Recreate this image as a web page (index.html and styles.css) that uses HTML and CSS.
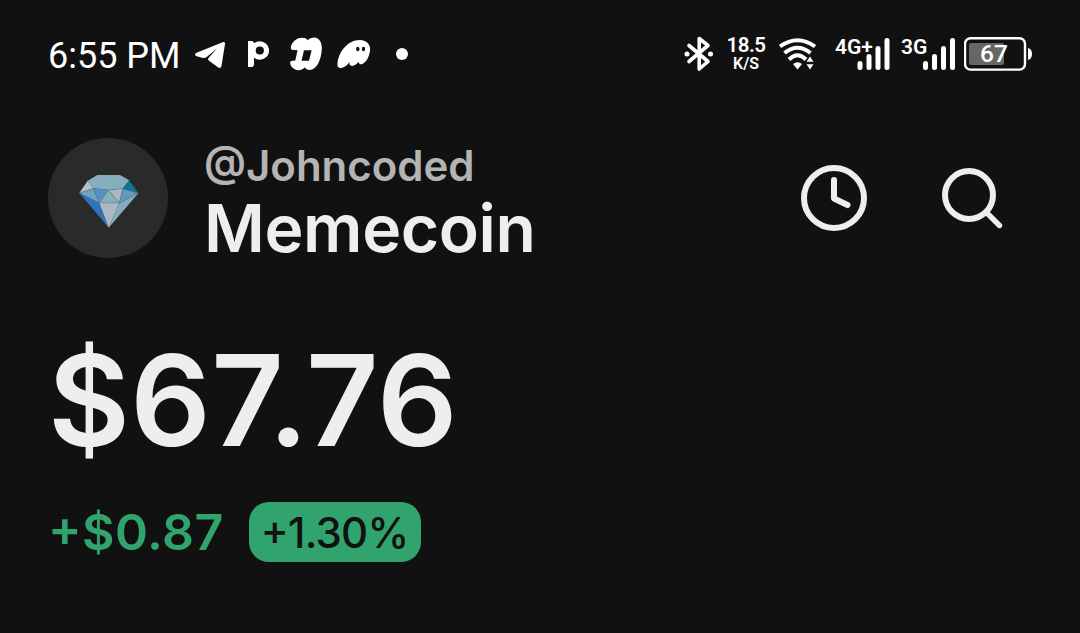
FILE: index.html
```html
<!DOCTYPE html>
<html lang="en">
<head>
  <meta charset="UTF-8">
  <meta name="viewport" content="width=device-width, initial-scale=1.0">
  <title>Memecoin Wallet</title>
  <link rel="stylesheet" href="styles.css">
</head>
<body>
<div class="status-bar">
  <div class="status-left">
    <span class="time">6:55 PM</span>
    <svg class="telegram" width="30" height="36" viewBox="0 0 30 36">
      <path d="M1 17 Q-1 18.5 1 20 L8 22 Q10 22.3 12 20.7 L22 12.5 L13.5 22 Q12.5 23.5 14 24.8 L23 31.3 Q25.8 33 26.5 30 L30 8 Q30.2 5.5 27.5 6.3 Z"/>
    </svg>
    <svg class="logo-p" width="21" height="36" viewBox="0 0 21 36">
      <path d="M0 5 L4.5 5 L6 7 V29 L4.5 31 H0 Z"/>
      <circle cx="11.8" cy="14.5" r="6.7" fill="none" stroke="#fff" stroke-width="5.2"/>
    </svg>
    <svg class="logo-ii" width="34" height="36" viewBox="0 0 34 36">
      <path d="M2.5 13.8 C0 11 5 1.8 12.7 1.8 C16 1.8 17.6 2.6 18.5 4.2 C20.5 2.4 23 1.6 25.5 1.6 C30.5 2 33.2 7 32.8 13 C32.3 24 27.5 34 20.5 34 C18 34 16.6 33 16 31.3 C14 33.4 11.5 34.3 9 34.2 C3.5 33.8 -0.5 27.5 1.8 25.3 Q3.5 24.4 6.3 24.4 L8.5 14.2 Z"/>
      <path class="hole" d="M15 14.3 H22.6 L20 24.8 H12.5 Z"/>
    </svg>
    <svg class="ghost" width="34" height="36" viewBox="0 0 34 36">
      <path d="M0.5 28 C1 17 10 4 23 4 C30 4 34 9 33 15 C32 22 28 28 24 28.3 C21.5 28.3 22 26 21.5 26 C20 28 17 30.5 14 29.8 C12 29 12.5 27 12.5 26 C10 29.5 7 32 3 32 C1 31.8 0.2 30 0.5 28 Z"/>
      <ellipse class="hole" cx="20.8" cy="13" rx="1.7" ry="2.3"/>
      <ellipse class="hole" cx="26.5" cy="13" rx="1.7" ry="2.3"/>
    </svg>
    <span class="dot"></span>
  </div>

  <div class="status-right">
    <svg class="bluetooth" width="30" height="36" viewBox="0 0 30 36">
      <path d="M5 9.5 L24 25.5 L15.2 33 V2.5 L24 9.5 L5 25.5" fill="none" stroke="#fff" stroke-width="3.6" stroke-linejoin="round" stroke-linecap="round"/>
      <circle cx="3" cy="18" r="2.5"/>
      <circle cx="26.5" cy="18" r="2.5"/>
    </svg>
    <div class="speed">
      <span class="speed-value">18.5</span>
      <span class="speed-unit">K/S</span>
    </div>
    <svg class="wifi" width="38" height="36" viewBox="0 0 38 36">
      <g fill="none" stroke="#fff" stroke-width="3.9">
        <path d="M1 10.5 Q18.5 -2 36 10.5"/>
        <path d="M5.5 17 Q18.5 6.5 31.5 17"/>
        <path d="M10 23.5 Q18.5 15 27 23.5"/>
      </g>
      <path d="M14 28 Q18.5 24.5 23 28 L18.5 33.5 Z"/>
      <path d="M27.5 25.8 L31 20.5 L34.5 25.8 Z M27.5 28.2 H34.5 L31 33.5 Z"/>
    </svg>
    <svg class="signal" width="55" height="36" viewBox="0 0 55 36">
      <text class="network" x="0" y="17.6">4G+</text>
      <rect x="22.5" y="25" width="5" height="9" rx="2.5"/>
      <rect x="31.5" y="18" width="5" height="16" rx="2.5"/>
      <rect x="40.5" y="10" width="5" height="24" rx="2.5"/>
      <rect x="49.5" y="2" width="5" height="32" rx="2.5"/>
    </svg>
    <svg class="signal" width="55" height="36" viewBox="0 0 55 36">
      <text class="network" x="0" y="17.6">3G</text>
      <rect x="22" y="25" width="5" height="9" rx="2.5"/>
      <rect x="31" y="18" width="5" height="16" rx="2.5"/>
      <rect x="40" y="10" width="5" height="24" rx="2.5"/>
      <rect x="49" y="2" width="5" height="32" rx="2.5"/>
    </svg>
    <svg class="battery" width="68" height="36" viewBox="0 0 68 36">
      <rect x="1" y="2.2" width="60" height="31.4" rx="5.5" fill="none" stroke="#fff" stroke-width="2.4"/>
      <rect x="5" y="7" width="35" height="22" rx="2" fill="#666"/>
      <path d="M64 12 Q68 13 68 18 Q68 23 64 24 Z"/>
      <text x="30" y="26.3" text-anchor="middle">67</text>
    </svg>
  </div>
</div>

<div class="header">
  <div class="avatar">
    <svg width="60" height="54" viewBox="0 0 60 54">
      <polygon points="18.3,0 41,0 50.3,5.3 43.7,13.7 29.3,15 14.3,13.3 8.7,5.7" fill="#87aebf"/>
      <polygon points="8.7,5.7 14.3,13.3 0.3,18" fill="#b5c3c8"/>
      <polygon points="50.3,5.3 59.3,18.3 43.7,13.7" fill="#127399"/>
      <polygon points="0.3,18 14.3,13.3 20.3,28" fill="#70a3bb"/>
      <polygon points="14.3,13.3 29.3,15 20.3,28" fill="#5591c4"/>
      <polygon points="29.3,15 40.3,28 20.3,28" fill="#83b1b8"/>
      <polygon points="29.3,15 43.7,13.7 40.3,28" fill="#a9b9c1"/>
      <polygon points="43.7,13.7 59.3,18.3 40.3,28" fill="#6599b8"/>
      <polygon points="0.3,18 20.3,28 29.7,52.7" fill="#2f72b6"/>
      <polygon points="20.3,28 40.3,28 29.7,52.7" fill="#adb9c0"/>
      <polygon points="40.3,28 59.3,18.3 29.7,52.7" fill="#86acc0"/>
      <path d="M14.3 13.3 L29.3 15 L43.7 13.7 L59.3 18.3 L40.3 28 H20.3 L0.3 18 Z M14.3 13.3 L20.3 28 L29.3 15 L40.3 28 L43.7 13.7" fill="none" stroke="#517e98" stroke-width="0.5"/>
    </svg>
  </div>
  <div class="account">
    <span class="handle">@Johncoded</span>
    <span class="name">Memecoin</span>
  </div>
  <div class="actions">
    <svg width="66" height="66" viewBox="0 0 66 66">
      <circle cx="33" cy="33" r="30"/>
      <path d="M33 15 V33.5 L46.5 40"/>
    </svg>
    <svg width="66" height="66" viewBox="0 0 66 66">
      <circle cx="32" cy="30" r="24"/>
      <path d="M50 48 L62.5 60.5" stroke-width="5.4"/>
    </svg>
  </div>
</div>

<div class="balance">$67.76</div>

<div class="change">
  <span class="change-amount">+$0.87</span>
  <span class="change-percent">+1.30%</span>
</div>
</body>
</html>
```
FILE: styles.css
```css
body {
  margin: 0;
  height: 633px;
  overflow: hidden;
  background-color: #111111;
  color: #eeeeee;
  font-family: Inter, sans-serif;
  font-weight: 600;
}

svg {
  display: block;
  flex-shrink: 0;
}

/* Status bar */
.status-bar {
  display: flex;
  justify-content: space-between;
  height: 36px;
  padding: 36px 48px 0 48px;
  font-family: Roboto, sans-serif;
  color: #ffffff;
}

.status-bar svg {
  fill: #ffffff;
}

.status-bar .hole {
  fill: #111111;
}

.status-left,
.status-right {
  display: flex;
  align-items: center;
}

.time {
  width: 147px;
  padding-top: 4px;
  font-size: 36px;
  font-weight: 400;
  line-height: 36px;
  white-space: nowrap;
}

.logo-p {
  margin-left: 23px;
}

.logo-ii {
  margin-left: 20px;
}

.ghost {
  margin-left: 14px;
}

.dot {
  width: 12px;
  height: 12px;
  margin-left: 25px;
  border-radius: 50%;
  background-color: #ffffff;
}

.bluetooth {
  margin-right: 13px;
}

.speed {
  display: flex;
  flex-direction: column;
  align-items: center;
  width: 38px;
  margin-right: 2px;
}

.speed-value {
  font-size: 20.5px;
  line-height: 19px;
  letter-spacing: -0.5px;
}

.speed-unit {
  font-size: 16px;
  line-height: 18px;
}

.wifi {
  margin-left: 12px;
}

.signal {
  margin-left: 18px;
}

.signal + .signal {
  margin-left: 11px;
}

.network {
  font-size: 21px;
}

.battery {
  margin-left: 8px;
  font-size: 24.5px;
  font-weight: 500;
}

/* Account header */
.header {
  display: flex;
  align-items: center;
  height: 120px;
  padding: 66px 77px 0 48px;
}

.avatar {
  display: flex;
  align-items: center;
  justify-content: center;
  width: 120px;
  height: 120px;
  padding: 7px 0 0 1px;
  box-sizing: border-box;
  border-radius: 50%;
  background-color: #2a2a2a;
}

.account {
  display: flex;
  flex-direction: column;
  margin-left: 36px;
  padding-top: 10px;
}

.handle {
  font-size: 42px;
  line-height: 50px;
  color: #b4b4b4;
}

.name {
  font-size: 66px;
  line-height: 74px;
  letter-spacing: -0.4px;
}

.actions {
  display: flex;
  gap: 70px;
  margin-left: auto;
}

.actions svg {
  fill: none;
  stroke: #eeeeee;
  stroke-width: 6;
  stroke-linecap: round;
  stroke-linejoin: round;
}

/* Balance */
.balance {
  margin: 66px 0 0 48px;
  font-size: 126px;
  line-height: 152px;
  letter-spacing: 0.3px;
}

/* keep the raised plus sign with custom letter spacing */
.change {
  display: flex;
  align-items: center;
  margin: 26px 0 0 48px;
  font-feature-settings: "calt" 1;
}

.change-amount {
  font-size: 50px;
  line-height: 60px;
  letter-spacing: 0.4px;
  color: #30a46c;
}

.change-percent {
  width: 172px;
  height: 60px;
  margin-left: 25px;
  border-radius: 20px;
  background-color: #30a46c;
  color: #111111;
  font-size: 42px;
  font-weight: 500;
  line-height: 62px;
  letter-spacing: -0.8px;
  text-align: center;
}
```
